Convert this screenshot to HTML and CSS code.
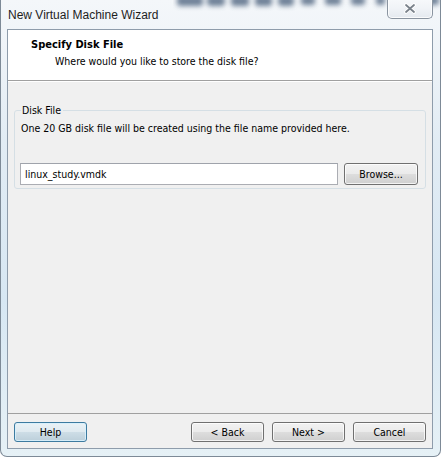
FILE: index.html
```html
<!DOCTYPE html>
<html>
<head>
<meta charset="utf-8">
<link rel="stylesheet" href="styles.css">
</head>
<body>
<div class="window">
  <svg class="backdrop" width="270" height="18" viewBox="0 0 270 18" aria-hidden="true">
    <defs>
      <filter id="bl" x="-20%" y="-80%" width="140%" height="260%">
        <feGaussianBlur stdDeviation="2.6"/>
      </filter>
    </defs>
    <g fill="#4f6580" filter="url(#bl)" opacity="0.8">
      <rect x="4" y="-4" width="26" height="10" rx="3"/>
      <rect x="34" y="-4" width="18" height="10" rx="4"/>
      <rect x="58" y="-4" width="18" height="10" rx="3"/>
      <rect x="82" y="-4" width="17" height="10" rx="3"/>
      <rect x="105" y="-4" width="16" height="10" rx="4"/>
      <rect x="128" y="-4" width="14" height="9" rx="3"/>
      <rect x="152" y="-4" width="16" height="9" rx="3"/>
      <rect x="178" y="-4" width="14" height="9" rx="3"/>
      <rect x="203" y="-4" width="9" height="9" rx="3"/>
      <rect x="222" y="-4" width="17" height="9" rx="4"/>
      <rect x="248" y="-4" width="18" height="9" rx="3"/>
    </g>
  </svg>
  <div class="titlebar">
    <span class="title">New Virtual Machine Wizard</span>
    <div class="close">
      <svg width="14" height="11" viewBox="0 0 14 11">
        <path d="M3 2 L11 9 M11 2 L3 9" stroke="#ffffff" stroke-width="3.6" stroke-linecap="round"/>
        <path d="M3 2 L11 9 M11 2 L3 9" stroke="#7a828b" stroke-width="1.8" stroke-linecap="round"/>
      </svg>
    </div>
  </div>
  <div class="client">
    <div class="header">
      <div class="h-title">Specify Disk File</div>
      <div class="h-desc">Where would you like to store the disk file?</div>
    </div>
    <div class="content">
      <fieldset class="group">
        <legend>Disk File</legend>
        <div class="group-body">
          <div class="info">One 20 GB disk file will be created using the file name provided here.</div>
          <div class="file-row">
            <div class="input">linux_study.vmdk</div>
            <div class="btn browse">Browse...</div>
          </div>
        </div>
      </fieldset>
    </div>
    <div class="footer">
      <div class="btn default">Help</div>
      <div class="spacer"></div>
      <div class="btn">&lt; Back</div>
      <div class="btn">Next &gt;</div>
      <div class="btn">Cancel</div>
    </div>
  </div>
</div>
</body>
</html>
```

FILE: styles.css
```css
html, body {
  margin: 0;
  padding: 0;
  background: #ffffff;
}

.window {
  position: relative;
  width: 441px;
  height: 457px;
  box-sizing: border-box;
  overflow: hidden;
  padding: 0 7px 7px 6px;
  display: flex;
  flex-direction: column;
  border: 1px solid #7d8a97;
  border-top: none;
  border-radius: 0 0 7px 7px;
  background:
    linear-gradient(180deg, #f4f7fa 0px, #f1f5f9 30px, #e2ecf4 140px, #d7e7f3 300px, #e6f1f6 457px);
}

.backdrop {
  position: absolute;
  left: 172px;
  top: 0;
}

.titlebar {
  position: relative;
  height: 29px;
  display: flex;
  align-items: flex-start;
}

.title {
  margin-top: 8px;
  padding-left: 1px;
  font-family: "Liberation Sans", sans-serif;
  font-size: 12px;
  color: #1e1e1e;
  position: relative;
}

.close {
  position: absolute;
  right: 0px;
  top: -1px;
  width: 46px;
  height: 20px;
  box-sizing: border-box;
  border: 1px solid #8a94a0;
  border-top: none;
  border-radius: 0 0 5px 5px;
  background: linear-gradient(180deg, #f7f9fb 0%, #f0f3f7 50%, #e4e9ef 100%);
  box-shadow: inset 0 0 0 1px rgba(255,255,255,0.8);
  display: flex;
  align-items: center;
  justify-content: center;
}

.client {
  flex: 1;
  display: flex;
  flex-direction: column;
  border: 1px solid #8e9cab;
  background: #f0f0f0;
  font-family: "DejaVu Sans Condensed", "DejaVu Sans", sans-serif;
  font-size: 10.5px;
  color: #000;
}

.header {
  height: 51px;
  box-sizing: border-box;
  background: #ffffff;
  border-bottom: 1px solid #a0a0a0;
  padding: 8px 0 0 23px;
}

.h-title {
  font-weight: bold;
  font-size: 11px;
  line-height: 13px;
}

.h-desc {
  margin-top: 4px;
  padding-left: 24px;
  line-height: 13px;
}

.content {
  flex: 1;
  padding: 22px 6px 0 6px;
  border-top: 1px solid #ffffff;
}

.group {
  margin: 0;
  padding: 0;
  border: 1px solid #d5dfe5;
  border-radius: 3px;
  min-width: 0;
}

.group legend {
  margin-left: 6px;
  padding: 0 2px 0 1px;
  line-height: 13px;
}

.group-body {
  padding: 5px 7px 3px 6px;
}

.info {
  line-height: 13px;
}

.file-row {
  margin-top: 28px;
  display: flex;
  align-items: center;
  gap: 6px;
  margin-left: -1px;
}

.input {
  flex: 1;
  height: 22px;
  box-sizing: border-box;
  border: 1px solid #abadb3;
  border-top-color: #9fa3ab;
  background: #ffffff;
  padding: 0 4px;
  line-height: 20px;
}

.btn {
  width: 73px;
  height: 20px;
  box-sizing: border-box;
  border: 1px solid #707070;
  border-radius: 3px;
  background: linear-gradient(180deg, #f2f2f2 0%, #ebebeb 48%, #dddddd 52%, #cfcfcf 100%);
  box-shadow: inset 0 0 0 1px rgba(255,255,255,0.75);
  text-align: center;
  line-height: 18px;
  color: #000;
}

.browse {
  width: 74px;
  height: 22px;
  line-height: 20px;
}

.btn.default {
  border-color: #3d7ba0;
  background: linear-gradient(180deg, #eaf2f6 0%, #dfeaf0 48%, #cddde6 52%, #bccfda 100%);
  box-shadow: inset 0 0 0 1px rgba(215,240,252,0.9);
}

.footer {
  height: 35px;
  box-sizing: border-box;
  border-top: 1px solid #a0a0a0;
  display: flex;
  align-items: flex-start;
  gap: 8px;
  padding: 8px 6px 0 6px;
}

.spacer {
  flex: 1;
}
```
